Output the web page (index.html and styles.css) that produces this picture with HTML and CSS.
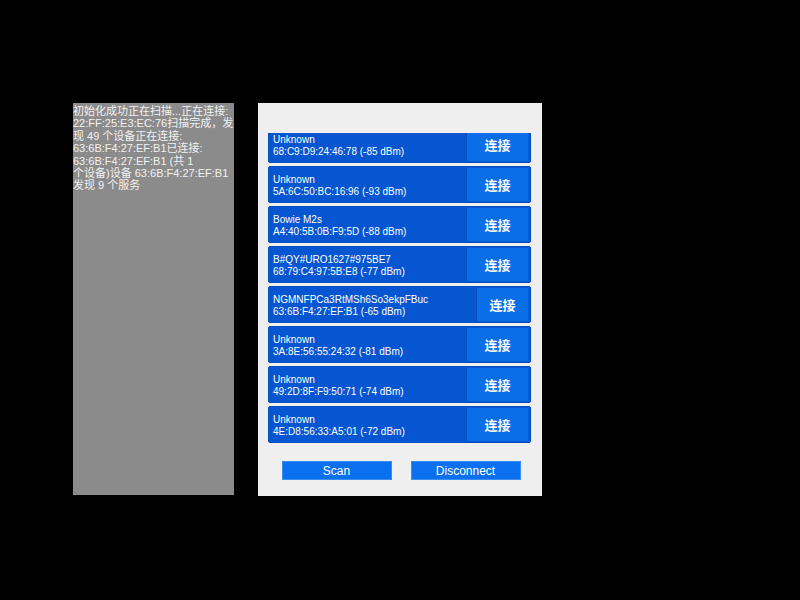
FILE: index.html
```html
<!DOCTYPE html>
<html>
<head>
<meta charset="utf-8">
<link rel="stylesheet" href="styles.css">
</head>
<body>
<div class="stage">
  <div class="log">初始化成功正在扫描...正在连接:<br>22:FF:25:E3:EC:76扫描完成，发<br>现 49 个设备正在连接:<br>63:6B:F4:27:EF:B1已连接:<br>63:6B:F4:27:EF:B1 (共 1<br>个设备)设备 63:6B:F4:27:EF:B1<br>发现 9 个服务</div>
  <div class="panel">
    <div class="viewport">
      <div class="list">
        <div class="row"><div class="info"><div>Unknown</div><div>68:C9:D9:24:46:78 (-85 dBm)</div></div><button class="connect">连接</button></div>
        <div class="row"><div class="info"><div>Unknown</div><div>5A:6C:50:BC:16:96 (-93 dBm)</div></div><button class="connect">连接</button></div>
        <div class="row"><div class="info"><div>Bowie M2s</div><div>A4:40:5B:0B:F9:5D (-88 dBm)</div></div><button class="connect">连接</button></div>
        <div class="row"><div class="info"><div>B#QY#URO1627#975BE7</div><div>68:79:C4:97:5B:E8 (-77 dBm)</div></div><button class="connect">连接</button></div>
        <div class="row row-wide"><div class="info"><div>NGMNFPCa3RtMSh6So3ekpFBuc</div><div>63:6B:F4:27:EF:B1 (-65 dBm)</div></div><button class="connect">连接</button></div>
        <div class="row"><div class="info"><div>Unknown</div><div>3A:8E:56:55:24:32 (-81 dBm)</div></div><button class="connect">连接</button></div>
        <div class="row"><div class="info"><div>Unknown</div><div>49:2D:8F:F9:50:71 (-74 dBm)</div></div><button class="connect">连接</button></div>
        <div class="row"><div class="info"><div>Unknown</div><div>4E:D8:56:33:A5:01 (-72 dBm)</div></div><button class="connect">连接</button></div>
      </div>
    </div>
    <div class="actions">
      <button class="action">Scan</button>
      <button class="action">Disconnect</button>
    </div>
  </div>
</div>
</body>
</html>
```
FILE: styles.css
```css
html, body {
  margin: 0;
  padding: 0;
  background: #000;
  width: 800px;
  height: 600px;
  overflow: hidden;
}
.stage {
  display: flex;
  align-items: flex-start;
  gap: 24px;
  padding: 103px 0 0 73px;
}
.log {
  width: 161px;
  height: 392px;
  background: #8b8b8b;
  color: #f2f2f2;
  font-family: "Liberation Sans", "Noto Sans CJK SC", sans-serif;
  font-size: 11px;
  line-height: 12.4px;
  white-space: nowrap;
  overflow: hidden;
  padding-top: 2px;
  box-sizing: border-box;
}
.panel {
  width: 284px;
  height: 393px;
  background: #efefef;
  box-sizing: border-box;
  padding: 30px 11px 0 10px;
  display: flex;
  flex-direction: column;
}
.viewport {
  height: 314px;
  overflow: hidden;
}
.list {
  margin-top: -7px;
  display: flex;
  flex-direction: column;
  gap: 3px;
}
.row {
  height: 37px;
  box-sizing: border-box;
  display: flex;
  align-items: stretch;
  background: #0559d6;
  border: 1px solid #044cbc;
  border-radius: 2px;
  padding: 1px 2px 1px 1px;
}
.info {
  flex: 1;
  min-width: 0;
  background: #0556d0;
  border-right: 1px solid #044dc0;
  padding: 2px 0 0 3px;
  display: flex;
  flex-direction: column;
  justify-content: center;
  font-family: "Liberation Sans", sans-serif;
  font-size: 10px;
  line-height: 12px;
  color: #fff;
  white-space: nowrap;
}
.connect {
  width: 61px;
  flex: none;
  margin: 0;
  border: none;
  border-radius: 1px;
  background: #0b6ee9;
  color: #fff;
  font-family: "Noto Sans CJK SC", sans-serif;
  font-weight: 700;
  font-size: 13px;
  padding: 0;
}
.row-wide .connect {
  width: 51px;
}
.actions {
  display: flex;
  justify-content: center;
  gap: 19px;
  margin-top: 14px;
  padding-left: 3px;
}
.action {
  width: 110px;
  height: 19px;
  box-sizing: border-box;
  margin: 0;
  padding: 0;
  background: #0a70ef;
  border: 1px solid #3a8ef2;
  border-radius: 0;
  color: #fff;
  font-family: "Liberation Sans", sans-serif;
  font-size: 12px;
}
```
